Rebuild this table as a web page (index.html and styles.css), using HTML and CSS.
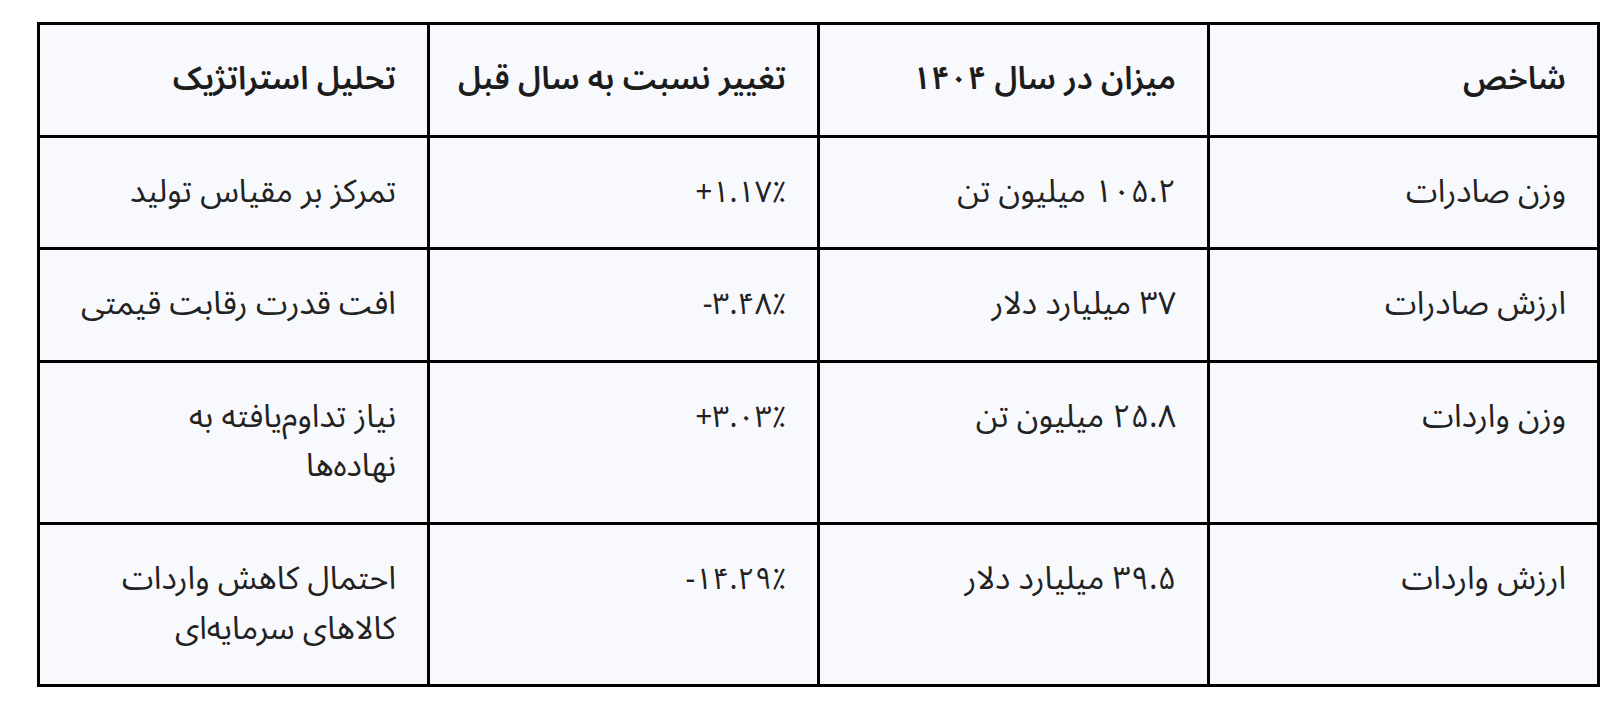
FILE: index.html
```html
<!DOCTYPE html>
<html lang="fa" dir="rtl">
<head>
<meta charset="utf-8">
<title>جدول</title>
<link rel="stylesheet" href="styles.css">
</head>
<body>
<div class="wrap">
<table class="data">
<thead>
<tr>
<th>شاخص</th>
<th>میزان در سال ۱۴۰۴</th>
<th>تغییر نسبت به سال قبل</th>
<th>تحلیل استراتژیک</th>
</tr>
</thead>
<tbody>
<tr>
<td>وزن صادرات</td>
<td>۱۰۵.۲ میلیون تن</td>
<td><span class="num" dir="ltr">+۱.۱۷٪</span></td>
<td>تمرکز بر مقیاس تولید</td>
</tr>
<tr>
<td>ارزش صادرات</td>
<td>۳۷ میلیارد دلار</td>
<td><span class="num" dir="ltr">-۳.۴۸٪</span></td>
<td>افت قدرت رقابت قیمتی</td>
</tr>
<tr>
<td>وزن واردات</td>
<td>۲۵.۸ میلیون تن</td>
<td><span class="num" dir="ltr">+۳.۰۳٪</span></td>
<td>نیاز تداوم‌یافته به<br>نهاده‌ها</td>
</tr>
<tr>
<td>ارزش واردات</td>
<td>۳۹.۵ میلیارد دلار</td>
<td><span class="num" dir="ltr">-۱۴.۲۹٪</span></td>
<td>احتمال کاهش واردات کالاهای سرمایه‌ای</td>
</tr>
</tbody>
</table>
</div>
</body>
</html>
```
FILE: styles.css
```css
html, body {
  margin: 0;
  padding: 0;
  background: #ffffff;
}
.wrap {
  padding: 22px 16px 0 37px;
}
.data {
  width: 100%;
  table-layout: fixed;
  border-collapse: collapse;
  font-family: "Noto Sans Arabic", "DejaVu Sans", sans-serif;
  font-size: 32px;
  line-height: 1.55;
  color: #222222;
  background: #f7f9fc;
}
.data th,
.data td {
  border: 3px solid #000;
  padding: 30px 31px;
  text-align: right;
  vertical-align: top;
}
.data th {
  font-weight: 600;
  color: #1c1c1c;
  white-space: nowrap;
}
.num {
  unicode-bidi: isolate;
  font-size: 30px;
}
```
